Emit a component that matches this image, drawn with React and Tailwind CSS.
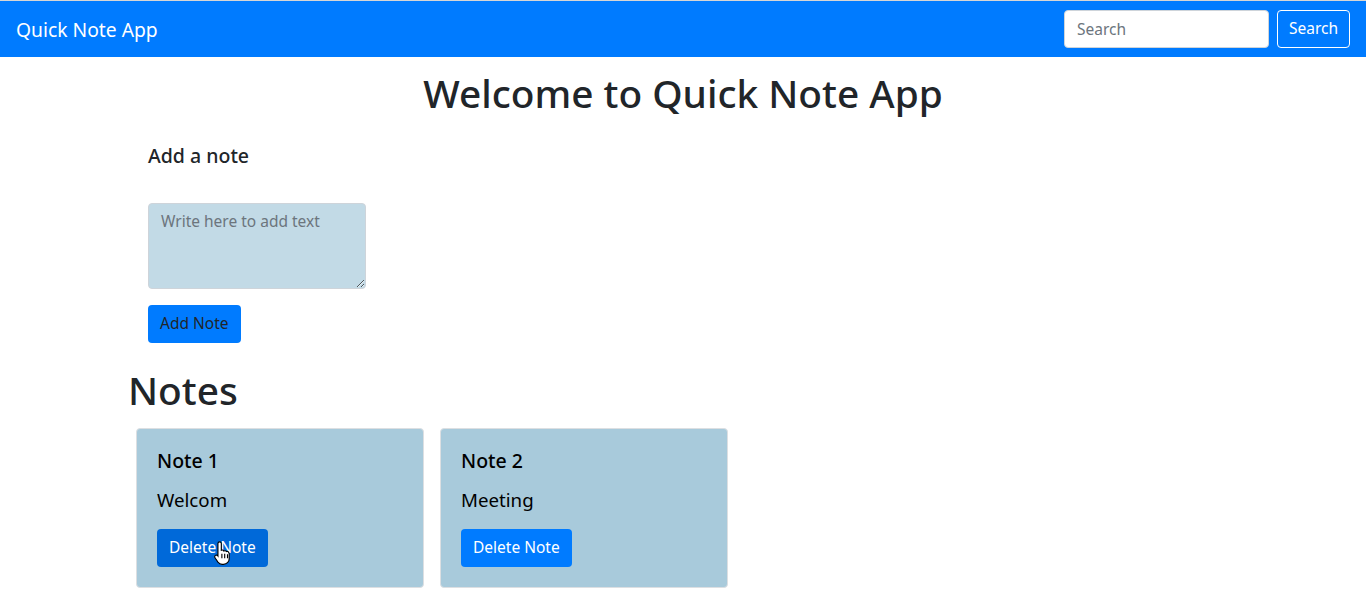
import React from 'react'

const FONT = { fontFamily: '"Segoe UI", "Noto Sans", "Liberation Sans", sans-serif' }

function NoteCard({ title, text, hover }) {
  return (
    <div className="m-2 w-[18rem] h-[160px] rounded border border-[#dcdfe2] bg-[#a8cadb] p-5 text-black">
      <h5 className="text-[19.5px] font-medium leading-[24px] mb-3">{title}</h5>
      <p className="text-[18.7px] leading-[30px] mb-[14px]">{text}</p>
      <div className="relative inline-block">
        <button
          className={`h-[38px] px-3 rounded text-white text-[15.5px] ${hover ? 'bg-[#0069d9]' : 'bg-[#007bff]'}`}
        >
          Delete Note
        </button>
        {hover && (
          <svg className="absolute left-[57px] top-[11px]" width="18" height="25" viewBox="0 0 16 22">
            <path
              d="M5 1.5c.8 0 1.5.7 1.5 1.5v6l.3-.1c.8-.3 1.7.1 2 .8.7-.5 1.8-.3 2.2.5.8-.4 1.8 0 2.1.8l.4 1v4.5c0 2.8-2.2 5-5 5H7.2c-1.5 0-2.8-.7-3.7-1.9L.9 15.7c-.5-.7-.4-1.6.3-2.1.6-.5 1.6-.4 2.1.2l.2.3V3c0-.8.7-1.5 1.5-1.5z"
              fill="white"
              stroke="black"
              strokeWidth="1"
            />
            <path d="M7 12v4M9.5 12v4M12 12.5v3.5" stroke="black" strokeWidth="1" />
          </svg>
        )}
      </div>
    </div>
  )
}

export default function App() {
  return (
    <div className="min-h-screen bg-white text-[#212529]" style={FONT}>
      {/* NAVBAR */}
      <nav className="border-t border-[#d6d6d6] h-[57px] bg-[#007bff] flex items-center justify-between pl-4 pr-4">
        <span className="text-white text-[19.3px] leading-[30px] mt-[2px]">Quick Note App</span>
        <div className="flex items-center gap-2">
          <input
            type="text"
            placeholder="Search"
            className="w-[205px] h-[38px] rounded border border-[#ced4da] bg-white px-3 text-[15.5px] text-[#495057] placeholder:text-[#6c757d] outline-none"
          />
          <button className="h-[38px] px-[11px] rounded border border-white text-white text-[15.5px]">Search</button>
        </div>
      </nav>

      <div className="max-w-[1140px] mx-auto px-[15px]">
        <h1 className="mt-3 text-center text-[38.8px] font-medium leading-[48px]">Welcome to Quick Note App</h1>

        <div className="px-5">
          <h5 className="mt-[27px] text-[19.5px] font-medium leading-[24px]">Add a note</h5>
          <textarea
            rows={3}
            placeholder="Write here to add text"
            className="mt-[35px] block w-[218px] h-[86px] rounded border border-[#ced4da] bg-[#c2dae6] px-3 py-[6px] text-[15.5px] text-[#495057] placeholder:text-[#6c757d] outline-none"
          />
          <button className="mt-4 h-[38px] px-3 rounded bg-[#007bff] text-[#212529] text-[15.5px]">Add Note</button>
        </div>

        <h1 className="mt-[23px] text-[38.8px] font-medium leading-[48px]">Notes</h1>

        <div className="flex flex-wrap mt-[6px]">
          <NoteCard title="Note 1" text="Welcom" hover />
          <NoteCard title="Note 2" text="Meeting" />
        </div>
      </div>
    </div>
  )
}
